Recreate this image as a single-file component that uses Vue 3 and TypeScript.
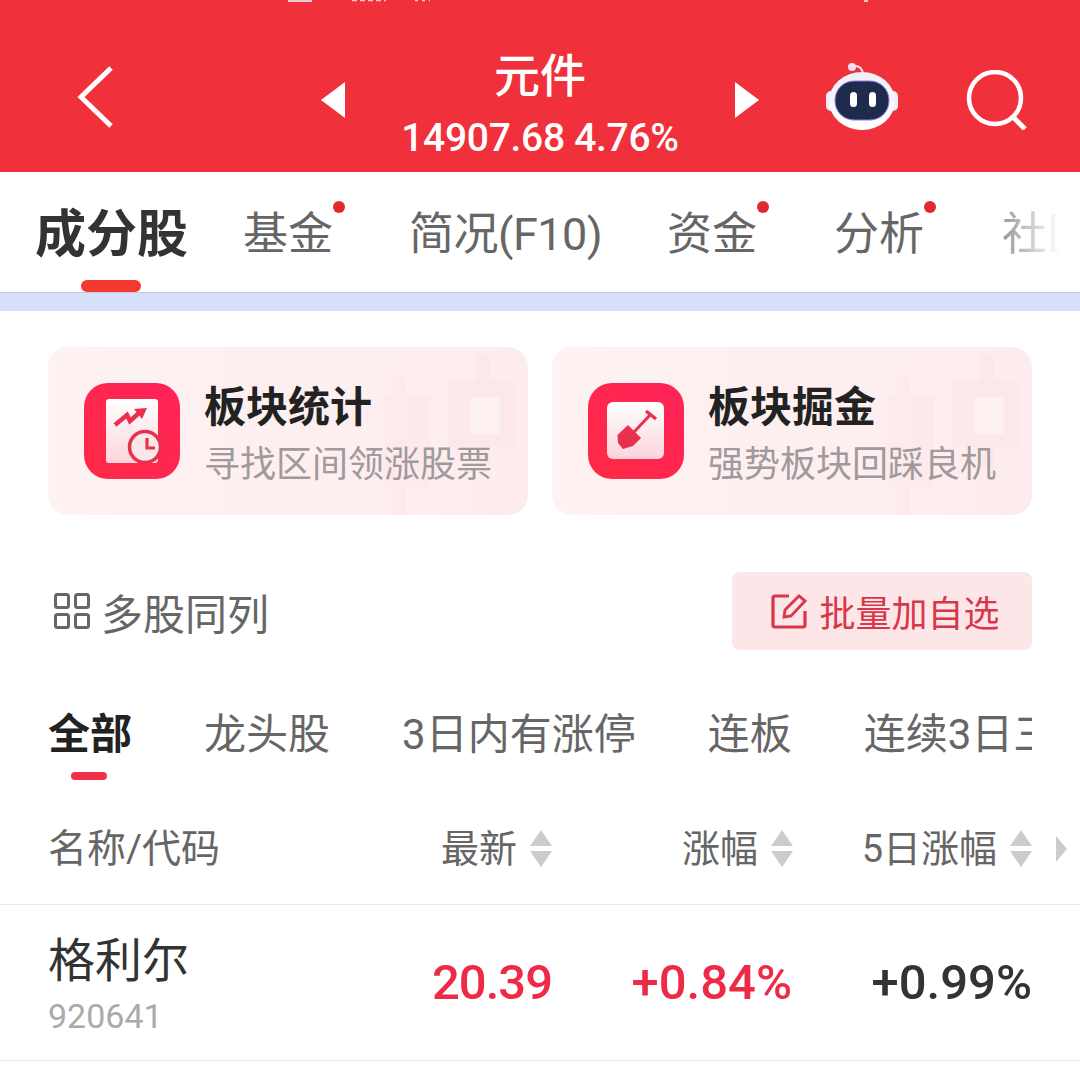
<template>
  <div class="page">
    <!-- 顶部红色标题栏 -->
    <header class="top">
      <svg class="status" width="640" height="3" viewBox="0 0 640 3">
        <rect x="28" y="0" width="24" height="2" fill="#f7c9cc" />
        <path d="M92 0.6 H126" stroke="#f7c9cc" stroke-width="1.2" stroke-dasharray="5 3" />
        <path d="M155 0.6 H170" stroke="#f7c9cc" stroke-width="1.2" stroke-dasharray="3 4" />
        <rect x="604" y="0" width="4" height="2" fill="#f7c9cc" />
      </svg>
      <svg class="back" width="40" height="66" viewBox="0 0 40 66">
        <path d="M35 4 L5 33 L35 62" fill="none" stroke="#fff" stroke-width="5" />
      </svg>
      <span class="tri tri-left"></span>
      <div class="title">
        <div class="name">元件</div>
        <div class="quote">14907.68 4.76%</div>
      </div>
      <span class="tri tri-right"></span>
      <svg class="robot" width="72" height="68" viewBox="0 0 72 68">
        <defs>
          <linearGradient id="shell" x1="0" y1="0" x2="0" y2="1">
            <stop offset="0" stop-color="#f1eefa" />
            <stop offset="1" stop-color="#ffffff" />
          </linearGradient>
        </defs>
        <circle cx="26" cy="5" r="4" fill="#f1dff0" />
        <path d="M29 4 Q36 4 37 12" fill="none" stroke="#f4e6f2" stroke-width="2" />
        <rect x="0" y="29" width="10" height="20" rx="5" fill="#efedf8" />
        <rect x="62" y="29" width="10" height="20" rx="5" fill="#efedf8" />
        <ellipse cx="36" cy="39" rx="33" ry="29" fill="url(#shell)" />
        <rect x="9" y="19" width="54" height="39" rx="19" fill="#1f2b4d" stroke="#8f7fe0" stroke-width="1" />
        <rect x="24" y="30" width="7" height="15" rx="3.5" fill="#fff" />
        <rect x="43" y="30" width="7" height="15" rx="3.5" fill="#fff" />
      </svg>
      <svg class="search" width="62" height="60" viewBox="0 0 62 60">
        <circle cx="29" cy="28" r="26" fill="none" stroke="#fff" stroke-width="4.5" />
        <path d="M47 47 L59 59" stroke="#fff" stroke-width="5" />
      </svg>
    </header>

    <!-- 主 tab -->
    <nav class="tabs">
      <div v-for="t in tabs" :key="t.label" class="tab" :class="{ on: t.on }">
        {{ t.label }}
        <i v-if="t.dot" class="dot"></i>
        <i v-if="t.on" class="bar"></i>
      </div>
      <div class="fade"></div>
    </nav>
    <div class="band"></div>

    <!-- 板块入口 -->
    <section class="cards">
      <div v-for="c in cards" :key="c.title" class="card">
        <svg class="mark" width="480" height="168" viewBox="0 0 480 168">
          <path d="M400 33h29V8h13v25h25v67h-25v20h-13v-20h-29z" fill="#fbdfe2" opacity=".3" />
          <rect x="422" y="50" width="30" height="37" fill="#fff" opacity=".35" />
          <path d="M335 50h10V30h13v20h24v90h-24v28h-13v-28h-10z" fill="#fbdfe2" opacity=".25" />
        </svg>
        <div class="app-icon">
          <svg v-if="c.kind === 'stat'" width="96" height="96" viewBox="0 0 96 96">
            <defs>
              <linearGradient id="paperA" x1="0" y1="0" x2="0" y2="1">
                <stop offset="0" stop-color="#ffffff" />
                <stop offset="1" stop-color="#fbd5dc" />
              </linearGradient>
            </defs>
            <rect x="22" y="16" width="52" height="64" rx="3" fill="url(#paperA)" />
            <path d="M31 42 L43 32 L46 38 L55 30" fill="none" stroke="#e8304f" stroke-width="4.5" />
            <path d="M50 26 L63 25 L58 36 Z" fill="#e8304f" />
            <circle cx="61" cy="64" r="15.5" fill="#f9e7ea" stroke="#e8304f" stroke-width="3.5" />
            <path d="M63 55 V65 H71" fill="none" stroke="#e8304f" stroke-width="3.2" />
          </svg>
          <svg v-else width="96" height="96" viewBox="0 0 96 96">
            <defs>
              <linearGradient id="paperB" x1="0" y1="0" x2="0" y2="1">
                <stop offset="0" stop-color="#ffffff" />
                <stop offset="1" stop-color="#fbd5dc" />
              </linearGradient>
            </defs>
            <rect x="19" y="19" width="57" height="57" rx="6" fill="url(#paperB)" />
            <path d="M40 42 L53 55 L45 63 L35 66 L30 60 L29.5 52 Z" fill="#e8304f" />
            <path d="M46 49 L63 31" stroke="#e8304f" stroke-width="3" />
            <path d="M58 28 L68 36" stroke="#e8304f" stroke-width="3.5" />
          </svg>
        </div>
        <div class="card-text">
          <div class="card-title">{{ c.title }}</div>
          <div class="card-sub">{{ c.sub }}</div>
        </div>
      </div>
    </section>

    <!-- 多股同列 / 批量加自选 -->
    <section class="tools">
      <div class="multi">
        <svg width="36" height="36" viewBox="0 0 36 36">
          <g fill="none" stroke="#666" stroke-width="3">
            <rect x="1.5" y="1.5" width="13" height="13" rx="2" />
            <rect x="21.5" y="1.5" width="13" height="13" rx="2" />
            <rect x="1.5" y="21.5" width="13" height="13" rx="2" />
            <rect x="21.5" y="21.5" width="13" height="13" rx="2" />
          </g>
        </svg>
        <span>多股同列</span>
      </div>
      <button class="batch">
        <svg width="36" height="36" viewBox="0 0 36 36">
          <path d="M18 3 H4 a2 2 0 0 0 -2 2 V32 a2 2 0 0 0 2 2 H32 a2 2 0 0 0 2 -2 V18" fill="none" stroke="#d9364a" stroke-width="3.2" />
          <path d="M13 24 L14 17 L28 3 L34 8 L20 23 Z" fill="none" stroke="#d9364a" stroke-width="2.8" />
        </svg>
        <span>批量加自选</span>
      </button>
    </section>

    <!-- 二级筛选 -->
    <div class="filters">
      <div v-for="(f, i) in filters" :key="f" class="filter" :class="{ on: i === 0 }">
        {{ f }}
        <i v-if="i === 0" class="filter-bar"></i>
      </div>
    </div>

    <!-- 表头 -->
    <div class="thead">
      <div class="th-name">名称/代码</div>
      <div v-for="h in heads" :key="h" class="th">
        <span class="th-label">{{ h }}</span>
        <span class="sort"><i class="up"></i><i class="down"></i></span>
      </div>
      <i class="more"></i>
    </div>

    <!-- 行 -->
    <div class="row">
      <div>
        <div class="stock">{{ stock.name }}</div>
        <div class="code">{{ stock.code }}</div>
      </div>
      <div class="num red price">{{ stock.price }}</div>
      <div class="num red">{{ stock.change }}</div>
      <div class="num">{{ stock.change5 }}</div>
    </div>
  </div>
</template>

<script setup lang="ts">
const tabs = [
  { label: '成分股', on: true, dot: false },
  { label: '基金', on: false, dot: true },
  { label: '简况(F10)', on: false, dot: false },
  { label: '资金', on: false, dot: true },
  { label: '分析', on: false, dot: true },
  { label: '社区', on: false, dot: false }
]

const cards = [
  { title: '板块统计', sub: '寻找区间领涨股票', kind: 'stat' },
  { title: '板块掘金', sub: '强势板块回踩良机', kind: 'dig' }
]

const filters = ['全部', '龙头股', '3日内有涨停', '连板', '连续3日三连板']
const heads = ['最新', '涨幅', '5日涨幅']

const stock = {
  name: '格利尔',
  code: '920641',
  price: '20.39',
  change: '+0.84%',
  change5: '+0.99%'
}
</script>

<style>
html,
body {
  margin: 0;
  background: #fff;
}
</style>

<style scoped>
.page {
  width: 1080px;
  height: 1085px;
  overflow: hidden;
  background: #fff;
  font-family: Roboto, "Noto Sans CJK SC", sans-serif;
}

.top {
  position: relative;
  height: 172px;
  box-sizing: border-box;
  padding: 24px 0 0 76px;
  display: flex;
  align-items: center;
  background: #f0303b;
  color: #fff;
}

.status {
  position: absolute;
  left: 260px;
  top: 0;
}

.back {
  flex: none;
  margin-top: -2px;
  margin-right: 205px;
}

.tri {
  flex: none;
  width: 0;
  height: 0;
  margin-top: 4px;
  border-top: 18px solid transparent;
  border-bottom: 18px solid transparent;
}

.tri-left {
  border-right: 24px solid #fff;
}

.tri-right {
  border-left: 24px solid #fff;
}

.title {
  flex: none;
  width: 390px;
  margin-top: 6px;
  text-align: center;
}

.name {
  font-family: "Noto Sans CJK SC", sans-serif;
  font-size: 46px;
  font-weight: 500;
  line-height: 60px;
}

.quote {
  font-size: 39px;
  line-height: 44px;
  margin-top: 14px;
  font-weight: 500;
  letter-spacing: -0.3px;
}

.robot {
  flex: none;
  margin-left: 67px;
  margin-top: -4px;
}

.search {
  flex: none;
  margin-left: 68px;
  margin-top: 4px;
}

.tabs {
  position: relative;
  height: 121px;
  box-sizing: border-box;
  padding-left: 35px;
  display: flex;
  align-items: center;
  gap: 78px;
  white-space: nowrap;
  overflow: hidden;
  border-bottom: 1px solid #c6cad6;
}

.tab {
  position: relative;
  font-size: 45px;
  line-height: 60px;
  color: #666;
  margin-top: 6px;
}

.tab.on {
  font-size: 51px;
  font-weight: 700;
  color: #333;
  margin-right: -23px;
}

.tab:nth-child(2) {
  margin-right: -2px;
}

.tab:nth-child(3) {
  margin-right: -13px;
  letter-spacing: -0.5px;
}

.tab:nth-child(4) {
  margin-right: -1px;
}

.dot {
  position: absolute;
  right: -12px;
  top: -4px;
  width: 12px;
  height: 12px;
  border-radius: 50%;
  background: #df2a30;
}

.bar {
  position: absolute;
  left: 46px;
  top: 75px;
  width: 60px;
  height: 12px;
  border-radius: 6px;
  background: #f5392f;
}

.fade {
  position: absolute;
  right: 0;
  top: 0;
  width: 80px;
  height: 100%;
  background: linear-gradient(90deg, rgba(255, 255, 255, 0.3), #fff 75%);
}

.band {
  height: 18px;
  background: #d6e0fb;
}

.cards {
  padding: 36px 48px 0;
  display: grid;
  grid-template-columns: 480px 480px;
  gap: 24px;
}

.card {
  position: relative;
  height: 168px;
  box-sizing: border-box;
  padding-left: 36px;
  display: flex;
  align-items: center;
  gap: 24px;
  border-radius: 20px;
  overflow: hidden;
  background: linear-gradient(90deg, #fef2f3, #fdecee);
}

.mark {
  position: absolute;
  left: 0;
  top: 0;
}

.app-icon {
  position: relative;
  flex: none;
  width: 96px;
  height: 96px;
  border-radius: 24px;
  background: linear-gradient(45deg, #ff2a45, #ff2358);
}

.app-icon svg {
  display: block;
}

.card-text {
  position: relative;
  font-family: "Noto Sans CJK SC", sans-serif;
}

.card-title {
  font-size: 42px;
  line-height: 56px;
  font-weight: 700;
  color: #222;
}

.card-sub {
  font-size: 36px;
  line-height: 50px;
  margin-top: 4px;
  color: #a09a9b;
}

.tools {
  margin-top: 57px;
  padding: 0 48px;
  display: flex;
  align-items: center;
  justify-content: space-between;
}

.multi {
  display: flex;
  align-items: center;
  gap: 11px;
  padding-left: 6px;
  font-family: "Noto Sans CJK SC", sans-serif;
  font-size: 42px;
  color: #666;
}

.batch {
  width: 300px;
  height: 78px;
  padding: 0 0 0 7px;
  border: none;
  border-radius: 8px;
  display: flex;
  align-items: center;
  justify-content: center;
  gap: 12px;
  background: #fde6e7;
  color: #d9364a;
  font-family: "Noto Sans CJK SC", sans-serif;
  font-size: 36px;
}

.filters {
  margin: 50px 48px 0;
  height: 60px;
  padding-bottom: 30px;
  display: flex;
  align-items: center;
  gap: 72px;
  overflow: hidden;
  white-space: nowrap;
  font-size: 42px;
  color: #666;
}

.filter {
  position: relative;
  flex: none;
}

.filter.on {
  font-weight: 700;
  color: #222;
}

.filter-bar {
  position: absolute;
  left: 23px;
  top: 72px;
  width: 36px;
  height: 8px;
  border-radius: 4px;
  background: #f1304a;
}

.thead {
  position: relative;
  height: 115px;
  box-sizing: border-box;
  padding: 2px 48px 0;
  display: grid;
  grid-template-columns: 1fr 240px 241px 239px;
  align-items: center;
  border-bottom: 1px solid #e8e8e8;
  font-size: 38px;
  color: #666;
}

.th-name {
  white-space: nowrap;
  font-size: 39px;
  margin-bottom: 6px;
}

.th {
  display: flex;
  align-items: center;
  justify-content: flex-end;
  gap: 13px;
  white-space: nowrap;
}

.th-label {
  margin-bottom: 6px;
}

.sort {
  display: flex;
  flex-direction: column;
  gap: 5px;
}

.up,
.down {
  display: block;
  width: 0;
  height: 0;
  border-left: 11px solid transparent;
  border-right: 11px solid transparent;
}

.up {
  border-bottom: 16px solid #ccc;
}

.down {
  border-top: 16px solid #ccc;
}

.more {
  position: absolute;
  left: 1056px;
  top: 46px;
  width: 0;
  height: 0;
  border-top: 13px solid transparent;
  border-bottom: 13px solid transparent;
  border-left: 11px solid #ccc;
}

.row {
  height: 156px;
  box-sizing: border-box;
  padding: 0 48px;
  display: grid;
  grid-template-columns: 1fr 240px 240px 240px;
  align-items: center;
  border-bottom: 1px solid #e8e8e8;
}

.stock {
  font-family: "Noto Sans CJK SC", sans-serif;
  font-size: 47px;
  line-height: 60px;
  color: #333;
}

.code {
  font-size: 34px;
  line-height: 44px;
  margin-top: 7px;
  color: #aaa;
}

.num {
  text-align: right;
  font-size: 49px;
  font-weight: 500;
  color: #333;
}

.num.red {
  color: #ee2b47;
}

.price {
  letter-spacing: -1px;
}
</style>
